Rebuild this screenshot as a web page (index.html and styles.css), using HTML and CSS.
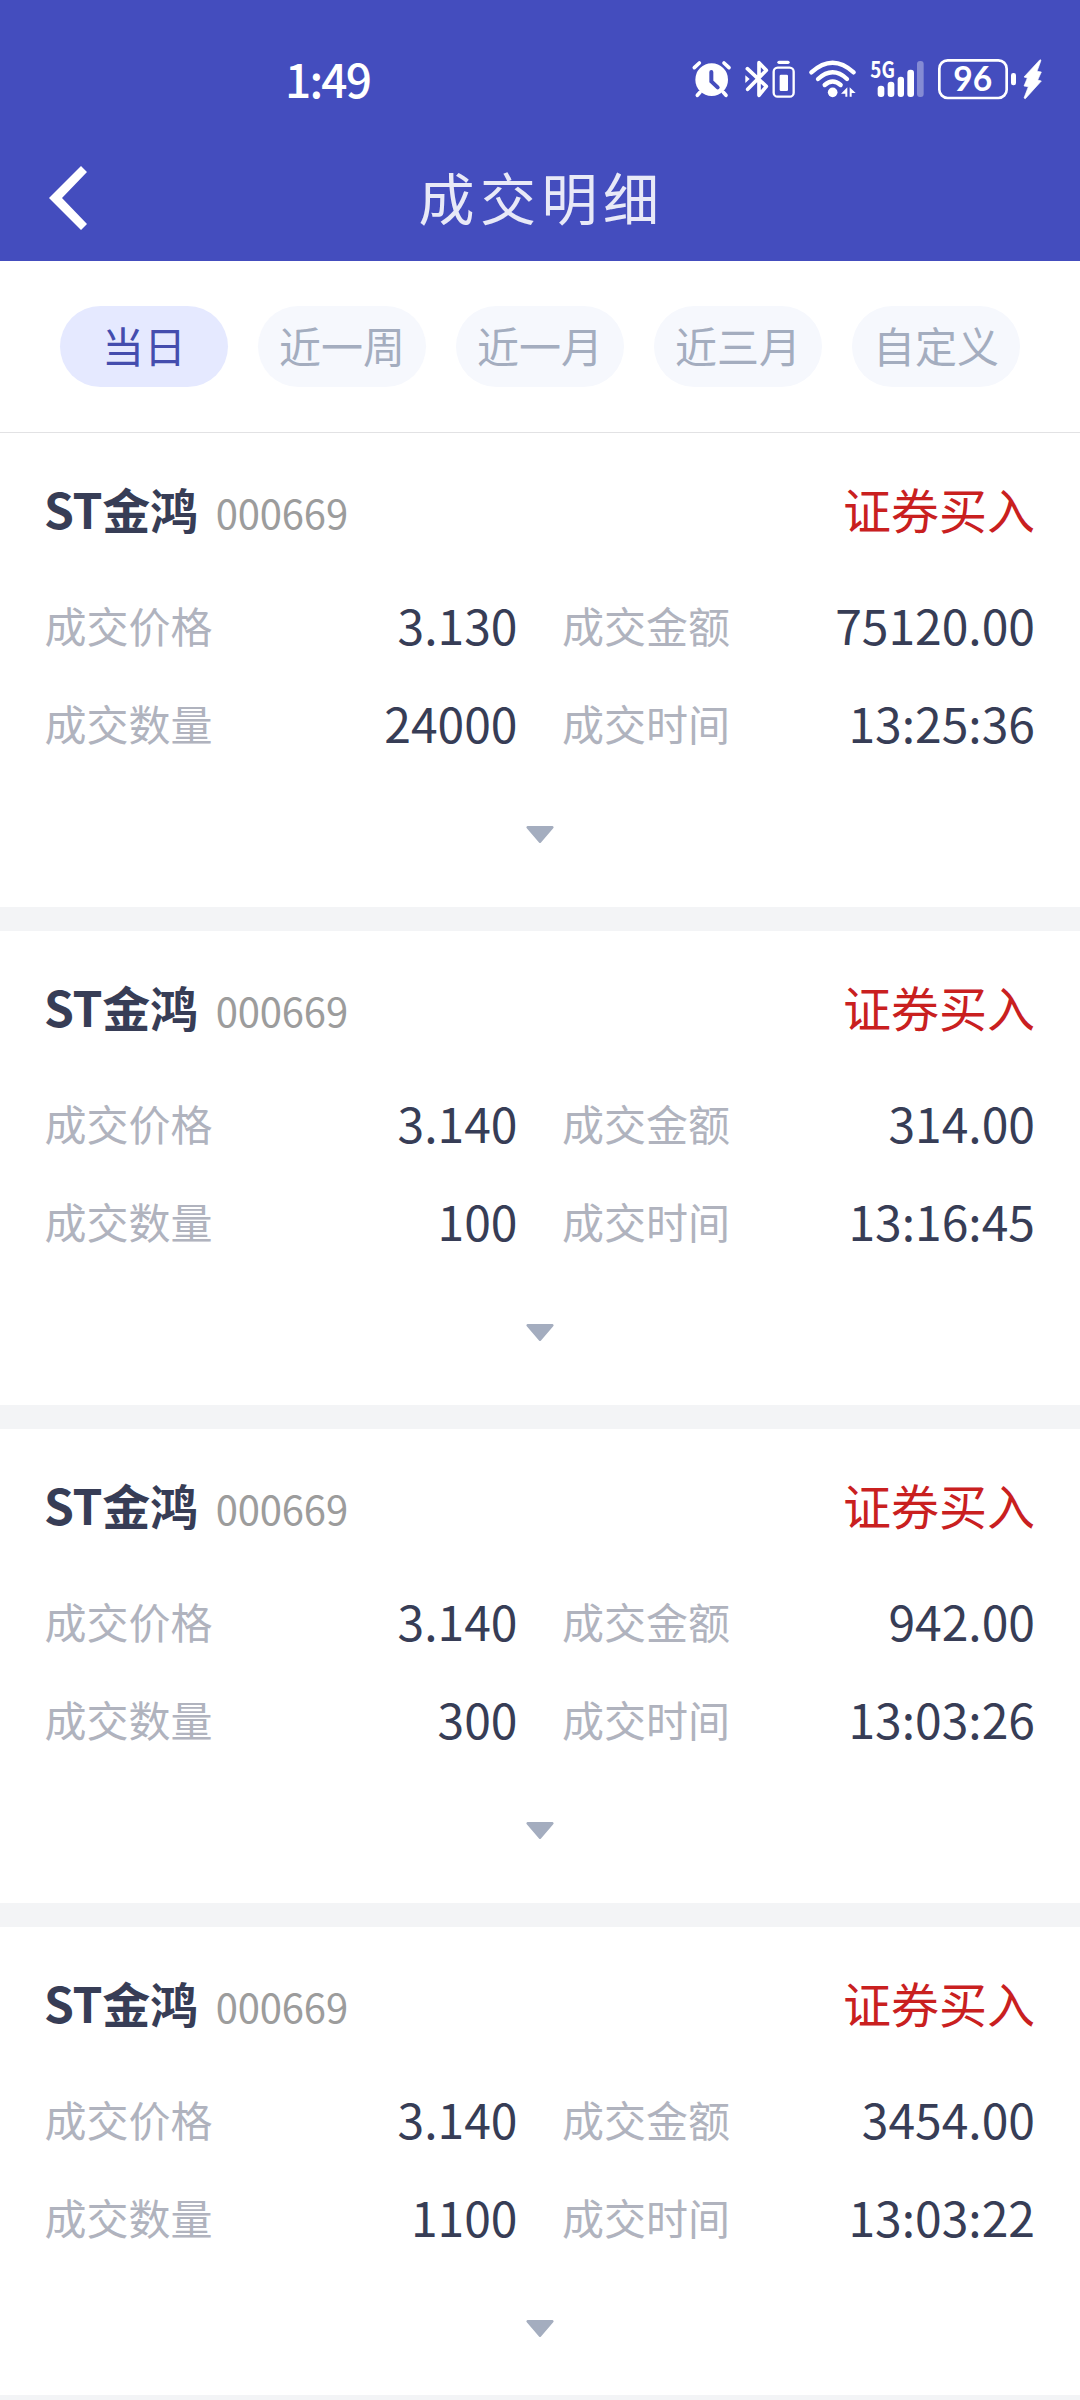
FILE: index.html
```html
<!DOCTYPE html>
<html lang="zh-CN">
<head>
<meta charset="utf-8">
<title>成交明细</title>
<link rel="stylesheet" href="styles.css">
</head>
<body>
<header class="header">
  <div class="status">
    <span class="clock">1:49</span>
    <div class="status-icons">
      <svg class="i-alarm" width="39" height="40" viewBox="36 57 117 120" fill="none" stroke="#fff" stroke-linecap="round">
        <circle cx="95" cy="119" r="49" fill="#fff" stroke="none"/>
        <path d="M43 83l15-14M132 69l15 14M60 157l-8 9M130 157l8 9" stroke-width="11"/>
        <path d="M94 96v28l19 18" stroke="#444dbe" stroke-width="12"/>
      </svg>
      <svg class="i-bt" width="52" height="40" viewBox="192 57 156 120" fill="none" stroke="#fff" stroke-linecap="round" stroke-linejoin="round">
        <path d="M202 86l57 53-22 27V68l22 23-56 57" stroke-width="11"/>
        <path d="M196 106l13 11-13 12z" fill="#fff" stroke="none"/>
        <path d="M297 67h27" stroke-width="10"/>
        <rect x="281" y="83" width="60" height="87" rx="12" stroke-width="7"/>
        <rect x="299" y="104" width="25" height="49" rx="4" fill="#fff" stroke="none"/>
      </svg>
      <svg class="i-wifi" width="49" height="40" viewBox="384 57 147 120" fill="none" stroke="#fff" stroke-linecap="round">
        <path d="M394 97q64-58 127 0M414 117q44-40 87 0M434 135q24-21 48 0" stroke-width="13"/>
        <circle cx="458" cy="157" r="14.500" fill="#fff" stroke="none"/>
        <path d="M502 142v28h-6v-9h-13zM509 142l18 17h-12v11h-6z" fill="#fff" stroke="none"/>
      </svg>
      <svg class="i-signal" width="55" height="40" viewBox="30 57 165 120">
        <text class="net" x="31" y="115" textLength="74" lengthAdjust="spacingAndGlyphs">5G</text>
        <g fill="#fff">
          <rect x="53" y="137" width="20" height="34" rx="9"/>
          <rect x="83" y="125" width="20" height="46" rx="9"/>
          <rect x="113" y="110" width="19" height="61" rx="9"/>
          <rect x="142" y="89" width="20" height="82" rx="9"/>
          <rect x="171" y="63" width="20" height="108" rx="9" opacity=".35"/>
        </g>
      </svg>
      <svg class="i-batt" width="78" height="40" viewBox="234 57 234 120">
        <rect x="238" y="61" width="202" height="113" rx="25" fill="none" stroke="#fff" stroke-width="8"/>
        <rect x="453" y="99" width="15" height="37" rx="7" fill="#fff"/>
        <text class="level" x="280" y="153" textLength="117" lengthAdjust="spacingAndGlyphs">96</text>
      </svg>
      <svg class="i-bolt" width="19" height="40" viewBox="489 57 57 120">
        <path d="M540 59l3 2-12 33 13 2-11 24 11 3-48 53-4-2 13-34-13-2 10-24-10-3z" fill="#fff" stroke="#fff" stroke-width="2" stroke-linejoin="round"/>
      </svg>
    </div>
  </div>
  <div class="navbar">
    <svg class="back" width="38" height="64" viewBox="0 0 38 64"><path d="M32 0l6 6L13 32l25 26-6 6L0 32z" fill="#fff"/></svg>
    <h1 class="title">成交明细</h1>
  </div>
</header>
<nav class="tabs">
  <span class="tab tab-active">当日</span>
  <span class="tab">近一周</span>
  <span class="tab">近一月</span>
  <span class="tab">近三月</span>
  <span class="tab">自定义</span>
</nav>
<main class="list">
  <section class="card">
    <div class="card-head"><b class="name">ST金鸿</b><span class="code">000669</span><span class="side">证券买入</span></div>
    <dl class="grid">
      <div class="cell"><dt>成交价格</dt><dd>3.130</dd></div><div class="cell"><dt>成交金额</dt><dd>75120.00</dd></div>
      <div class="cell"><dt>成交数量</dt><dd>24000</dd></div><div class="cell"><dt>成交时间</dt><dd>13:25:36</dd></div>
    </dl>
    <svg class="arrow" width="28" height="18" viewBox="0 0 28 18"><path d="M1.500 0h25q2 1 .5 2.500L15 16.500q-1 1-2 0L1 2.500Q-.5 1 1.500 0z"/></svg>
  </section>
  <section class="card">
    <div class="card-head"><b class="name">ST金鸿</b><span class="code">000669</span><span class="side">证券买入</span></div>
    <dl class="grid">
      <div class="cell"><dt>成交价格</dt><dd>3.140</dd></div><div class="cell"><dt>成交金额</dt><dd>314.00</dd></div>
      <div class="cell"><dt>成交数量</dt><dd>100</dd></div><div class="cell"><dt>成交时间</dt><dd>13:16:45</dd></div>
    </dl>
    <svg class="arrow" width="28" height="18" viewBox="0 0 28 18"><path d="M1.500 0h25q2 1 .5 2.500L15 16.500q-1 1-2 0L1 2.500Q-.5 1 1.500 0z"/></svg>
  </section>
  <section class="card">
    <div class="card-head"><b class="name">ST金鸿</b><span class="code">000669</span><span class="side">证券买入</span></div>
    <dl class="grid">
      <div class="cell"><dt>成交价格</dt><dd>3.140</dd></div><div class="cell"><dt>成交金额</dt><dd>942.00</dd></div>
      <div class="cell"><dt>成交数量</dt><dd>300</dd></div><div class="cell"><dt>成交时间</dt><dd>13:03:26</dd></div>
    </dl>
    <svg class="arrow" width="28" height="18" viewBox="0 0 28 18"><path d="M1.500 0h25q2 1 .5 2.500L15 16.500q-1 1-2 0L1 2.500Q-.5 1 1.500 0z"/></svg>
  </section>
  <section class="card card-last">
    <div class="card-head"><b class="name">ST金鸿</b><span class="code">000669</span><span class="side">证券买入</span></div>
    <dl class="grid">
      <div class="cell"><dt>成交价格</dt><dd>3.140</dd></div><div class="cell"><dt>成交金额</dt><dd>3454.00</dd></div>
      <div class="cell"><dt>成交数量</dt><dd>1100</dd></div><div class="cell"><dt>成交时间</dt><dd>13:03:22</dd></div>
    </dl>
    <svg class="arrow" width="28" height="18" viewBox="0 0 28 18"><path d="M1.500 0h25q2 1 .5 2.500L15 16.500q-1 1-2 0L1 2.500Q-.5 1 1.500 0z"/></svg>
  </section>
</main>
</body>
</html>
```
FILE: styles.css
```css
* { box-sizing: border-box; }
body {
  margin: 0;
  width: 1080px;
  height: 2400px;
  overflow: hidden;
  background: #f3f4f6;
  font-family: "Noto Sans CJK SC", sans-serif;
  color: #373d56;
}
svg { display: block; flex: none; overflow: visible; }

.header { height: 261px; background: #444dbe; color: #fff; }
.status {
  height: 138px;
  padding: 20px 38px 0 285px;
  display: flex;
  align-items: center;
  justify-content: space-between;
}
.clock { padding-bottom: 3px; font-size: 46px; font-weight: 500; line-height: 60px; letter-spacing: -1.8px; }
.status-icons { display: flex; align-items: center; }
.i-bt { margin-left: 13px; }
.i-wifi { margin-left: 12px; }
.i-signal { margin-left: 13px; }
.i-batt { margin-left: 13px; }
.i-bolt { margin-left: 7px; }
.net { font: 700 68px "Noto Sans CJK SC", sans-serif; fill: #fff; }
.level { font: 700 104px Lato, sans-serif; fill: #fff; }

.navbar {
  height: 120px;
  padding: 0 49px;
  display: grid;
  grid-template-columns: 38px 1fr 38px;
  align-items: center;
}
.title {
  margin: 0;
  padding: 0 0 4px 3px;
  font-size: 56px;
  font-weight: 400;
  line-height: 80px;
  letter-spacing: 5.500px;
  text-align: center;
  color: #e8e9f7;
}

.tabs {
  height: 172px;
  padding: 45px 60px 0;
  display: flex;
  gap: 30px;
  align-items: flex-start;
  background: #fff;
  border-bottom: 1px solid #e2e2e4;
}
.tab {
  flex: 1;
  height: 81px;
  line-height: 77px;
  border-radius: 41px;
  background: #f6f8fd;
  color: #a4adbf;
  font-size: 42px;
  text-align: center;
}
.tab-active { background: #e5e9ff; color: #444dae; }

.list { display: flex; flex-direction: column; gap: 24px; }
.card { height: 474px; padding: 37px 45px 0; background: #fff; }
.card-last { height: 468px; }
.card-head { height: 76px; display: flex; align-items: baseline; line-height: 76px; }
.name { margin-left: -1px; font-size: 48px; font-weight: 700; letter-spacing: -0.300px; }
.code { margin-left: 18px; font-size: 40px; letter-spacing: -0.150px; color: #9c9c9c; }
.side { margin-left: auto; font-size: 48px; color: #c9201f; }
.grid {
  margin: 29px 0 0;
  display: grid;
  grid-template-columns: 1fr 1fr;
  column-gap: 45px;
}
.cell {
  height: 98px;
  display: flex;
  justify-content: space-between;
  align-items: center;
}
dt { margin-left: -0.500px; font-size: 42px; color: #b0b3be; }
dd { margin: 0; font-size: 48px; }
.arrow { margin: 55px auto 0; fill: #a4adbf; }
```
